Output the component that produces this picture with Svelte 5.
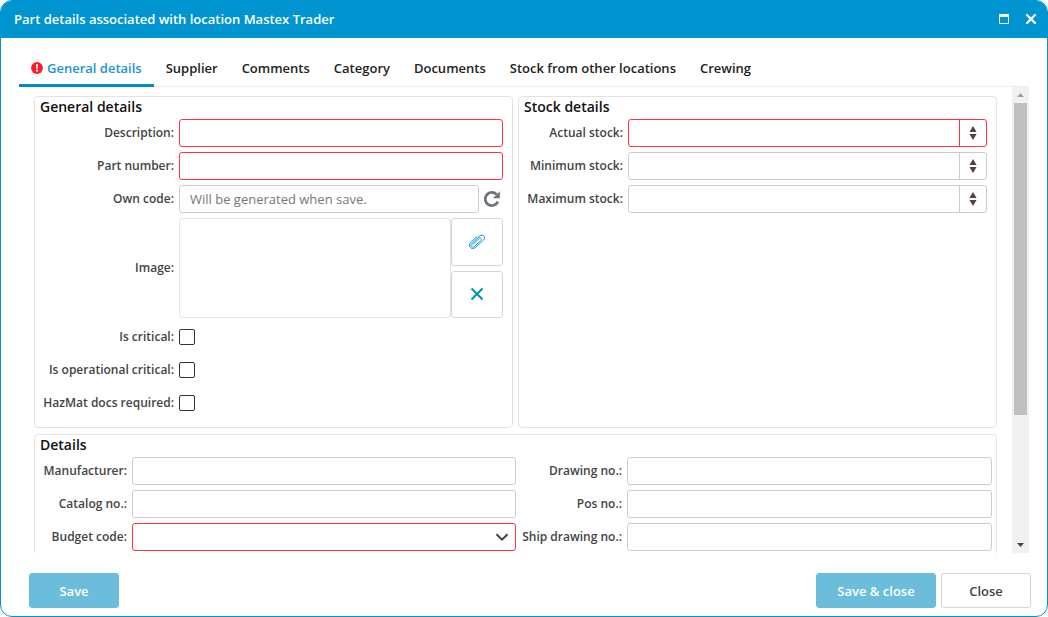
<script>
  const tabs = ['General details', 'Supplier', 'Comments', 'Category', 'Documents', 'Stock from other locations', 'Crewing'];
  let active = $state('General details');

  const stock = [
    { id: 'actual', label: 'Actual stock:', required: true },
    { id: 'minimum', label: 'Minimum stock:', required: false },
    { id: 'maximum', label: 'Maximum stock:', required: false }
  ];
  const flags = [
    { id: 'critical', label: 'Is critical:' },
    { id: 'operational', label: 'Is operational critical:' },
    { id: 'hazmat', label: 'HazMat docs required:' }
  ];
</script>

<main class="dialog">
  <header class="titlebar">
    <h1>Part details associated with location Mastex Trader</h1>
    <button class="window-btn" aria-label="Maximize">
      <svg width="12" height="12" viewBox="0 0 12 12"><path d="M1.500 1v9.500h9V1" fill="none" stroke="#fff" /><path d="M1 1h10v3H1z" fill="#fff" /></svg>
    </button>
    <button class="window-btn" aria-label="Close window">
      <svg width="12" height="12" viewBox="0 0 12 12"><path d="M2 2l8 8M10 2l-8 8" stroke="#fff" stroke-width="2.4" stroke-linecap="round" /></svg>
    </button>
  </header>

  <nav class="tabs">
    {#each tabs as tab, i}
      <button class="tab" class:active={active === tab} onclick={() => (active = tab)}>
        {#if i === 0}
          <svg width="12" height="12" viewBox="0 0 13 13" aria-hidden="true"><circle cx="6.5" cy="6.5" r="6.4" fill="#ff1a2d" /><path d="M5.4 2.4h2.2l-.3 4.9H5.7zM5.5 8.4h2v1.9h-2z" fill="#fff" /></svg>
        {/if}
        {tab}
      </button>
    {/each}
  </nav>

  <div class="viewport">
    <div class="content">
      <div class="columns">
        <section class="panel">
          <h2>General details</h2>
          <div class="form general">
            <label for="description">Description:</label>
            <input id="description" class="field required" type="text" />
            <label for="part">Part number:</label>
            <input id="part" class="field required" type="text" />
            <label for="code">Own code:</label>
            <div class="code">
              <input id="code" class="field" type="text" placeholder="Will be generated when save." />
              <button class="refresh" aria-label="Generate code">
                <svg width="18" height="18" viewBox="0 0 18 18"><path d="M14.9 11.6A6.6 6.6 0 1 1 13.6 4.4" fill="none" stroke="#6b757b" stroke-width="2.8" /><path d="M16.8 1.3v6.9H9.9z" fill="#6b757b" /></svg>
              </button>
            </div>
            <label for="attach">Image:</label>
            <div class="image">
              <div class="preview"></div>
              <div class="image-actions">
                <button id="attach" aria-label="Attach image">
                  <svg width="18" height="18" viewBox="0 0 18 18"><path d="M4.8 11.500l6.1-5.700c1.6-1.500 3.3.3 1.8 1.8l-6.3 5.900c-2.2 2-4.900-.8-2.800-2.800l7.300-6.800M10.2 4.500l1.700-1.500c3-2.700 6.500 1.100 3.700 3.900l-7.800 7.300c-4.200 3.800-8.700-1.400-5.200-4.700l6.200-5.800" fill="none" stroke="#1196cf" stroke-linecap="round" /></svg>
                </button>
                <button aria-label="Remove image">
                  <svg width="14" height="14" viewBox="0 0 14 14"><path d="M1.5 1.5l11 11M12.5 1.5l-11 11" stroke="#008fb9" stroke-width="2" /></svg>
                </button>
              </div>
            </div>
            {#each flags as flag}
              <label for={flag.id}>{flag.label}</label>
              <input id={flag.id} class="check" type="checkbox" />
            {/each}
          </div>
        </section>

        <section class="panel">
          <h2>Stock details</h2>
          <div class="form stock">
            {#each stock as item}
              <label for={item.id}>{item.label}</label>
              <div class="number" class:required={item.required}>
                <input id={item.id} type="text" inputmode="numeric" />
                <button class="stepper" aria-label="Change value">
                  <svg width="8" height="16" viewBox="0 0 8 16"><path d="M4 1l3.6 6H.4zM4 15L.4 9h7.2z" fill="#574240" /></svg>
                </button>
              </div>
            {/each}
          </div>
        </section>
      </div>

      <section class="panel">
        <h2>Details</h2>
        <div class="form details">
          <label for="manufacturer">Manufacturer:</label>
          <input id="manufacturer" class="field" type="text" />
          <label for="drawing">Drawing no.:</label>
          <input id="drawing" class="field" type="text" />
          <label for="catalog">Catalog no.:</label>
          <input id="catalog" class="field" type="text" />
          <label for="pos">Pos no.:</label>
          <input id="pos" class="field" type="text" />
          <label for="budget">Budget code:</label>
          <div class="select">
            <select id="budget" class="field required"><option value=""></option></select>
            <svg width="14" height="14" viewBox="0 0 14 14" aria-hidden="true"><path d="M1.5 4.2L7 9.7l5.5-5.5" fill="none" stroke="#444" stroke-width="2" /></svg>
          </div>
          <label for="ship">Ship drawing no.:</label>
          <input id="ship" class="field" type="text" />
        </div>
      </section>
    </div>

    <div class="scrollbar" aria-hidden="true">
      <svg width="17" height="16" viewBox="0 0 17 16"><path d="M8.5 6l3.5 4H5z" fill="#a0a0a0" /></svg>
      <div class="track"><div class="thumb"></div></div>
      <svg width="17" height="17" viewBox="0 0 17 17"><path d="M5 7h7l-3.5 4z" fill="#444" /></svg>
    </div>
  </div>

  <footer class="actions">
    <button class="btn primary">Save</button>
    <span class="spacer"></span>
    <button class="btn primary wide">Save &amp; close</button>
    <button class="btn">Close</button>
  </footer>
</main>

<style>
  :global(body) {
    margin: 0;
    background: #fff;
  }
  .dialog,
  .dialog * {
    box-sizing: border-box;
  }
  .dialog {
    display: flex;
    flex-direction: column;
    height: 100vh;
    border: 1px solid #0095d0;
    border-radius: 12px;
    overflow: hidden;
    background: #fff;
    font-family: 'Open Sans', 'Noto Sans', sans-serif;
    font-size: 12px;
    font-weight: 600;
    color: #444;
  }
  button,
  input,
  select {
    font: inherit;
    color: inherit;
    margin: 0;
    padding: 0;
  }
  button {
    background: none;
    border: 0;
    cursor: pointer;
  }
  svg {
    display: block;
    flex: none;
  }
  .titlebar {
    display: flex;
    align-items: center;
    gap: 15px;
    flex: none;
    height: 37px;
    padding: 0 10px 2px 13px;
    background: #0095d0;
    color: #fff;
  }
  h1 {
    flex: 1;
    margin: 0;
    font-size: 13px;
    font-weight: 600;
  }
  .tabs {
    display: flex;
    flex: none;
    margin: 14px 18px 0;
    border-bottom: 1px solid #eee;
  }
  .tab {
    display: flex;
    align-items: center;
    gap: 4px;
    height: 35px;
    margin-bottom: -1px;
    padding: 0 12px;
    border-bottom: 3px solid transparent;
    font-size: 13px;
    color: #222;
    white-space: nowrap;
  }
  .tab.active {
    border-bottom-color: #0089cb;
    color: #1c94d2;
  }
  .viewport {
    display: flex;
    flex: 1;
    min-height: 0;
    margin: 0 18px;
    overflow: hidden;
  }
  .content {
    flex: 1;
    display: flex;
    flex-direction: column;
    gap: 6px;
    padding: 9px 15px 0;
    overflow: hidden;
  }
  .columns {
    display: grid;
    grid-template-columns: 1fr 1fr;
    gap: 5px;
    flex: none;
  }
  .panel {
    flex: none;
    padding: 0 9px 10px 5px;
    border: 1px solid #e3e3e3;
    border-radius: 4px;
  }
  h2 {
    margin: 0;
    font-size: 14px;
    line-height: 19px;
    padding-bottom: 3px;
    font-weight: 600;
    color: #111;
  }
  .form {
    display: grid;
    gap: 5px;
    align-items: center;
  }
  .general {
    grid-template-columns: 134px 1fr;
  }
  .stock {
    grid-template-columns: 99px 1fr;
  }
  .details {
    grid-template-columns: 87px 384fr 101px 365fr;
    margin-right: -5px;
  }
  label {
    text-align: right;
    line-height: 28px;
    white-space: nowrap;
  }
  .field,
  .number {
    width: 100%;
    height: 28px;
    min-width: 0;
    border: 1px solid #ccc;
    border-radius: 3px;
    background: #fff;
    outline: none;
  }
  .field {
    padding: 0 10px;
    font-size: 13px;
    font-weight: 400;
  }
  .field::placeholder {
    color: #777;
    opacity: 1;
  }
  .required {
    border-color: #fb3547;
  }
  .code {
    display: flex;
    align-items: center;
    gap: 4px;
  }
  .refresh {
    width: 20px;
    flex: none;
  }
  .image {
    display: flex;
    height: 100px;
  }
  .preview {
    flex: 1;
    border: 1px solid #e3e3e3;
    border-radius: 4px;
  }
  .image-actions {
    display: flex;
    flex-direction: column;
    gap: 5px;
    width: 52px;
  }
  .image-actions button {
    display: grid;
    place-items: center;
    flex: 1;
    border: 1px solid #d5d5d5;
    border-radius: 3px;
  }
  .check {
    appearance: none;
    width: 16px;
    height: 16px;
    border: 1px solid #333;
    border-radius: 2px;
    background: #fff;
  }
  .check:checked {
    background: #0095d0;
  }
  .number {
    display: flex;
  }
  .number input {
    flex: 1;
    min-width: 0;
    padding: 0 10px;
    border: 0;
    background: none;
    outline: none;
  }
  .stepper {
    display: grid;
    place-items: center;
    width: 27px;
    padding-bottom: 1px;
    border-left: 1px solid #ccc;
  }
  .required .stepper {
    border-color: #fb3547;
  }
  .select {
    display: grid;
    align-items: center;
  }
  .select > * {
    grid-area: 1 / 1;
  }
  .select select {
    appearance: none;
  }
  .select svg {
    justify-self: end;
    margin-right: 7px;
    pointer-events: none;
  }
  .scrollbar {
    display: flex;
    flex-direction: column;
    flex: none;
    width: 17px;
    background: #f1f1f1;
  }
  .track {
    flex: 1;
    padding: 0 2px;
  }
  .thumb {
    height: 72%;
    background: #bfbfbf;
  }
  .actions {
    display: flex;
    gap: 5px;
    flex: none;
    padding: 20px 16px 8px 28px;
  }
  .spacer {
    flex: 1;
  }
  .btn {
    width: 90px;
    height: 35px;
    border: 1px solid #d5d5d5;
    border-radius: 3px;
    background: #fff;
    font-size: 13px;
  }
  .btn.primary {
    border-color: #6cbddc;
    background: #6cbddc;
    color: #fff;
  }
  .btn.wide {
    width: 120px;
    margin-left: -5px;
  }
</style>
